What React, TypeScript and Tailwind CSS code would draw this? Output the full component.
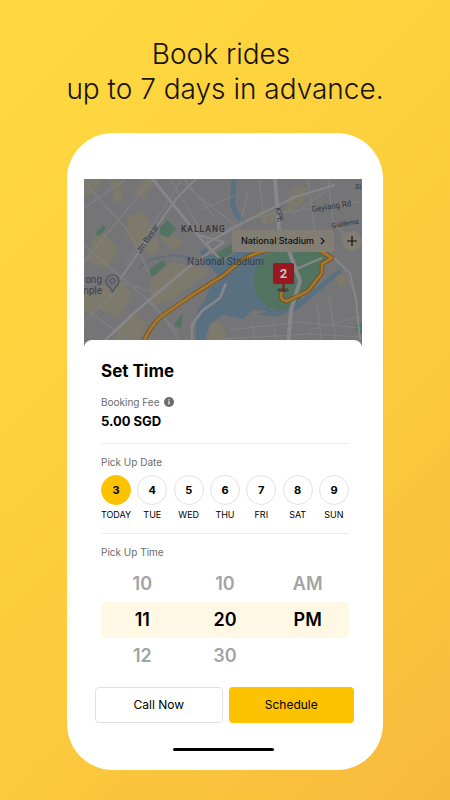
import { useState } from "react";

const DAYS = [
  { date: 3, label: "TODAY" },
  { date: 4, label: "TUE" },
  { date: 5, label: "WED" },
  { date: 6, label: "THU" },
  { date: 7, label: "FRI" },
  { date: 8, label: "SAT" },
  { date: 9, label: "SUN" },
];

const ROUTE =
  "M142 345C148 332 153 322 166 313L194 294 224 275C234 267 240 260 250 256 258 252 268 249 282 249H318L324 253 332 258 322 264 322 273 315 282 308 291 298 296 287 301C281 301 280 297 282 291";

function CityMap() {
  return (
    <svg
      viewBox="84 179 278 168"
      preserveAspectRatio="xMidYMid slice"
      className="block h-[168px] w-full font-['Roboto','Liberation_Sans',sans-serif]"
      role="img"
      aria-label="Map around the National Stadium"
    >
      <rect x="84" y="179" width="278" height="168" fill="#757578" />
      {/* city blocks */}
      <g fill="#7d7a6c">
        <path d="M84 179h18l-6 12-12 5zM110 179h9l4 20-8 5zM144 179h13l-14 21-8-6z" />
        <path d="M128 216l14-5 10 14-2 14-12 10-12-14zM93 238l12-5 14 16-12 20-22-9zM147 243l9-6 4 10-7 9-9-5zM166 229l18 13-10 8-14-12z" />
        <path d="M150 280l22-18 38 8-37 30-22 6zM98 288l20-10 15 17-16 22-22-10zM84 288l17 16-9 10-8-4zM118 327l14-13 16 9-14 24h-22z" />
        <path d="M292 190l16-3-6 18-18 9zM256 212l18-2 3 10-14 5zM209 326l7-7 8 8 3 16h-19zM335 276l10-3 2 12-8 2z" />
      </g>
      {/* parks */}
      <g fill="#527360">
        <path d="M96 233l7-8 3 3-8 9zM160 228l7-8 9 9-8 9-8-4zM150 269l13-9 3 5-11 10-6 2zM175 323l8-10-2 15-6-1zM212 256l18-11 12 2-26 16zM355 325l7-2v12l-6-5z" />
      </g>
      {/* rivers */}
      <path d="M235 179c-4 7 0 10-2 17s1 16 9 25" fill="none" stroke="#587080" strokeWidth="5" />
      <path d="M138 268l14-9 22-4 24 4" fill="none" stroke="#646f78" strokeWidth="2" />
      <path d="M199 251l7-3 6 9 14 3 10-8 30-4-4 40 10 24-18-3-11 10-20-4-13 9-6 18h-8v-16l1-15 9-12 3-10 12-9-9-12z" fill="#587080" />
      <path d="M258 314l18 3 22-8 44-37-3-3-42 34z" fill="#587080" />
      {/* stadium grounds */}
      <ellipse cx="280" cy="280" rx="26" ry="30" fill="#527360" />
      <path d="M284 250h36l11 8-9 8-1 8-14 18-20 9z" fill="#527360" />
      {/* local streets */}
      <g fill="none" stroke="#808084" strokeWidth="1.2">
        <path d="M84 208l42-29M84 262l68-83M84 322l33-32M86 184l43 48 22 45M84 245l28 24 44 38 29 40M151 179l31 38 24 29M170 179l40 66M184 179l30 37M185 185l55 44M126 265l40-60 16-26M198 211l36-15M259 180l6 44M210 236l50-20 102-15M308 179l8 61M328 179l5 42 20 24M84 308l43 31M118 282l36 10M148 301l30 32" />
        <path d="M228 330l71-8 62 6M220 339l90-5 52 3M225 346l91-6 46 2M252 322l4 24M273 319l4 28M317 303l5 43M329 296l8 50M309 330l53-14M345 270l12 30M240 225l8-34M292 215l34-24" />
      </g>
      {/* arterial roads */}
      <g fill="none" stroke="#87878a">
        <path d="M120 279l56-80 20-20" strokeWidth="2" />
        <path d="M153 179l50 62 16 17M98 347l36-34 52-44 38-27" strokeWidth="2.500" />
        <path d="M224 242l-26-7M205 244l47-26 43-21 40-12" strokeWidth="2" />
        <path d="M275 179l4 50 10 22 11 30-9 29-3 36" strokeWidth="4" />
        <path d="M289 272l33-14M332 256l18 17 6 27 4 40" strokeWidth="2" />
        <path d="M192 347v-22l10-14 18-13 6-15" strokeWidth="2.500" />
      </g>
      <path d={ROUTE} fill="none" stroke="#735020" strokeWidth="4.500" strokeLinejoin="round" strokeLinecap="round" />
      <path d={ROUTE} fill="none" stroke="#a5772a" strokeWidth="2.800" strokeLinejoin="round" strokeLinecap="round" />
      {/* place names */}
      <g fill="#333438" fontSize="8">
        <text x="181" y="232" fontSize="8.500" letterSpacing="1" fontWeight="500">KALLANG</text>
        <text transform="translate(140 254) rotate(-55)">Jln Besar</text>
        <text transform="translate(275 208) rotate(78)">KPE</text>
        <text transform="translate(312 212) rotate(-9)">Geylang Rd</text>
        <text transform="translate(332 228) rotate(-9)" fontSize="7">Guillema</text>
        <text x="355" y="189" fontSize="7">Si</text>
        <text x="187" y="265" fontSize="10" fill="#353f46">National Stadium</text>
      </g>
      <g fill="#414247" fontSize="10">
        <text x="102" y="283" textAnchor="end">ong</text>
        <text x="102" y="294" textAnchor="end">nple</text>
      </g>
      <path d="M112.500 292l-3-5a6.500 6.500 0 1 1 6 0z" fill="#717277" stroke="#505156" strokeWidth="1.200" />
      <circle cx="112.500" cy="281" r="2.500" fill="none" stroke="#505156" />
      {/* destination pin */}
      <ellipse cx="283" cy="290" rx="6" ry="2" fill="#3c4c40" />
      <path d="M283.500 283v8" stroke="#86171e" strokeWidth="2" />
      <rect x="273" y="263" width="21" height="21" rx="2" fill="#98181f" />
      <text x="283.500" y="278" textAnchor="middle" fontSize="13" fontWeight="700" fill="#c8c3c4">2</text>
    </svg>
  );
}

type WheelProps = {
  name: string;
  options: string[];
  value: string;
  onChange: (value: string) => void;
};

function Wheel({ name, options, value, onChange }: WheelProps) {
  return (
    <div role="radiogroup" aria-label={name} className="min-w-0 flex-1">
      {options.map((option) => (
        <label
          key={option}
          className="relative block h-9 cursor-pointer text-center text-[18px] leading-9 font-semibold text-[#a3a3a3] has-checked:text-black"
        >
          <input
            type="radio"
            name={name}
            value={option}
            checked={option === value}
            onChange={() => onChange(option)}
            className="sr-only"
          />
          {option}
        </label>
      ))}
    </div>
  );
}

export default function App() {
  const [day, setDay] = useState(3);
  const [hour, setHour] = useState("11");
  const [minute, setMinute] = useState("20");
  const [period, setPeriod] = useState("PM");

  return (
    <main className="min-h-screen bg-linear-[135deg,#ffda3f,#fbcb3d_60%,#f8b93c] pt-[37px] pb-[30px] font-['Inter','Liberation_Sans',sans-serif] text-black">
      <h1 className="text-center text-[28px] leading-[35px] font-light text-[#17130a]">
        Book rides{"\u00a0"}
        <br />
        up to 7 days in advance.
      </h1>

      <div className="mx-auto mt-[26px] w-full max-w-[316px] rounded-[46px] bg-white pt-[46px] pr-[21px] pb-[19px] pl-[17px]">
        <div className="relative">
          <CityMap />
          <div className="absolute top-[51px] right-0 flex h-[22px] items-center gap-2">
            <button
              type="button"
              className="flex h-[22px] w-[102px] items-center justify-center gap-1.5 rounded-xs bg-[#827e73] text-[9px] font-medium whitespace-nowrap text-[#111]"
            >
              National Stadium
              <svg viewBox="0 0 6 10" className="h-2 w-[5px]" fill="none" stroke="currentColor" strokeWidth="1.500" aria-hidden="true">
                <path d="M1 1l4 4-4 4" />
              </svg>
            </button>
            <button type="button" aria-label="Add stop" className="flex size-5 items-center justify-center rounded-full bg-[#827e73]">
              <svg viewBox="0 0 10 10" className="size-2.5" stroke="#111" strokeWidth="1.200" aria-hidden="true">
                <path d="M5 0v10M0 5h10" />
              </svg>
            </button>
          </div>
        </div>

        <section className="relative -mt-[7px] rounded-t-lg bg-white pt-5">
          <div className="pr-[13px] pl-[17px]">
            <h2 className="text-[17px] leading-[22px] font-bold">Set Time</h2>
            <p className="mt-3 flex items-center gap-[5px] text-[10px] leading-4 text-[#6b6b6b]">
              Booking Fee
              <svg viewBox="0 0 10 10" className="size-2.5" role="img" aria-label="About the fee">
                <circle cx="5" cy="5" r="5" fill="#6b6b6b" />
                <path d="M5 4.300v3.300M5 2.200v1.200" stroke="#fff" strokeWidth="1.200" />
              </svg>
            </p>
            <p className="text-[13px] leading-[22px] font-bold">5.00 SGD</p>

            <div className="mt-[11px] border-t border-[#ededed] pt-2.5">
              <p id="date-heading" className="text-[10px] leading-4 text-[#6b6b6b]">
                Pick Up Date
              </p>
              <div role="radiogroup" aria-labelledby="date-heading" className="mt-[5px] flex justify-between">
                {DAYS.map(({ date, label }) => (
                  <label key={date} className="relative flex w-[30px] cursor-pointer flex-col items-center">
                    <input
                      type="radio"
                      name="date"
                      value={date}
                      checked={day === date}
                      onChange={() => setDay(date)}
                      className="peer sr-only"
                    />
                    <span className="flex size-[30px] items-center justify-center rounded-full border border-[#e2e2e2] text-[11px] font-bold peer-checked:border-[#fdc300] peer-checked:bg-[#fdc300]">
                      {date}
                    </span>
                    <span className="mt-1 text-[9px] leading-3">{label}</span>
                  </label>
                ))}
              </div>
            </div>

            <div className="mt-3 border-t border-[#ededed] pt-2.5">
              <p className="text-[10px] leading-4 text-[#6b6b6b]">Pick Up Time</p>
              <div className="relative mt-1.5 flex">
                <div className="absolute inset-x-0 top-9 h-9 rounded-sm bg-[#fff8e4]" />
                <Wheel name="Hour" options={["10", "11", "12"]} value={hour} onChange={setHour} />
                <Wheel name="Minute" options={["10", "20", "30"]} value={minute} onChange={setMinute} />
                <Wheel name="Period" options={["AM", "PM"]} value={period} onChange={setPeriod} />
              </div>
            </div>
          </div>

          <div className="mt-[13px] flex gap-1.5 pr-2 pl-[11px] text-[12px]">
            <button type="button" className="h-9 flex-1 rounded-sm border border-[#e2e2e2] bg-white">
              Call Now
            </button>
            <button type="button" className="h-9 flex-1 rounded-sm bg-[#fdc300]">
              Schedule
            </button>
          </div>
          <div className="mx-auto mt-[25px] h-[3px] w-[101px] rounded-full bg-black" />
        </section>
      </div>
    </main>
  );
}
